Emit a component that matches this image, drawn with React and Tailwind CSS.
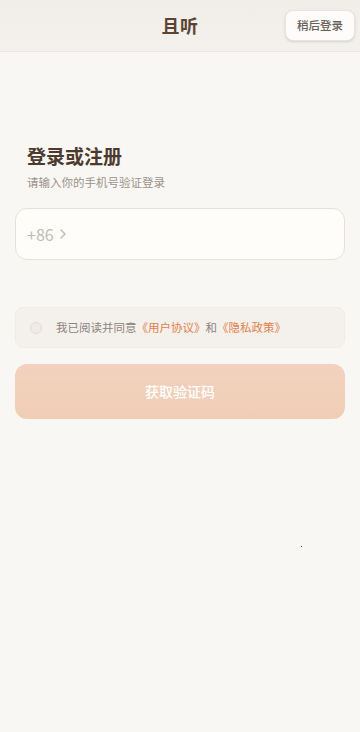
export default function App() {
    const font = { fontFamily: '"Noto Sans CJK SC", "Noto Sans", sans-serif' }
    return (
        <div style={font} className="min-h-[732px] w-[360px] bg-[#f9f7f3] relative overflow-hidden">
            {/* Header */}
            <div className="h-[52px] bg-gradient-to-b from-[#f1ede7] to-[#f4f1ec] border-b border-[#ece7e0] flex items-center justify-center relative">
                <span className="text-[18px] font-bold text-[#5a4535] tracking-wide">且听</span>
                <button className="absolute right-[5px] top-[10px] h-[31px] w-[70px] rounded-lg bg-[#fdfcfa] border border-[#e9e4dd] text-[11.5px] font-medium text-[#6a605a] flex items-center justify-center shadow-sm">
                    稍后登录
                </button>
            </div>

            {/* Body */}
            <div className="px-[15px] pt-[91px]">
                <h1 className="pl-[12px] text-[19px] leading-[26px] font-bold text-[#4b3a2d]">登录或注册</h1>
                <p className="pl-[12px] mt-[5px] text-[11.5px] leading-[16px] text-[#9b928a]">请输入你的手机号验证登录</p>

                <div className="mt-[18px] h-[52px] rounded-xl bg-[#fffdf9] border border-[#e7e1da] flex items-center px-[11px]">
                    <span className="text-[16px] text-[#c2bab2]">+86</span>
                    <svg className="ml-[5px]" width="8" height="12" viewBox="0 0 8 12" fill="none">
                        <path d="M2 2l4 4-4 4" stroke="#c2bab2" strokeWidth="1.4" strokeLinecap="round" strokeLinejoin="round" />
                    </svg>
                </div>

                <div className="mt-[47px] h-[41px] rounded-lg bg-[#f4f1ec] border border-[#efebe5] flex items-center pl-[14px]">
                    <span className="w-[12px] h-[12px] rounded-full border border-[#e3ddd6] bg-[#efebe5]"></span>
                    <span className="ml-[14px] text-[11.5px] text-[#8c837c]">
                        我已阅读并同意
                        <span className="text-[#e2804b]">《用户协议》</span>
                        和
                        <span className="text-[#e2804b]">《隐私政策》</span>
                    </span>
                </div>

                <button className="mt-[16px] w-full h-[55px] rounded-xl bg-gradient-to-b from-[#f2d2bf] to-[#f0cdb5] text-white text-[14px] font-medium flex items-center justify-center">
                    获取验证码
                </button>
            </div>

            <span className="absolute left-[301px] top-[546px] w-[1px] h-[1px] bg-[#555]"></span>
        </div>
    )
}
